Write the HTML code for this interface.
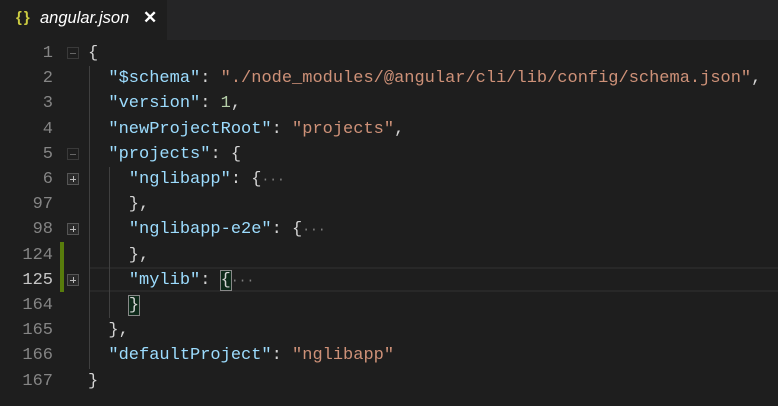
<!DOCTYPE html>
<html><head><meta charset="utf-8"><style>
body{margin:0;width:778px;height:406px;background:#1e1e1e;overflow:hidden;font-family:"Liberation Mono",monospace;}
.tabs{position:absolute;left:0;top:0;width:778px;height:40px;background:#252526;}
.tab{position:absolute;left:0;top:0;width:167px;height:40px;background:#1e1e1e;font-family:"Liberation Sans",sans-serif;}
.tab .ic{position:absolute;left:16px;top:9px;color:#cbcb41;font-size:15px;font-weight:bold;letter-spacing:2px}
.tab .nm{position:absolute;left:40px;top:9px;color:#fff;font-size:16.5px;font-style:italic}
.tab .x{position:absolute;left:143px;top:8px;color:#fff;font-size:17px;font-weight:bold}
.row{position:absolute;left:0;height:25.2px;width:778px;line-height:25.2px;font-size:17px;white-space:pre;color:#d4d4d4;top:1px}
.ln{position:absolute;left:0;width:53px;text-align:right;color:#858585}
.code{position:absolute;left:88px}
.k{color:#9cdcfe}.s{color:#ce9178}.n{color:#b5cea8}.e{color:#808080;font-size:13px}
.fold{position:absolute;left:67px;top:6px;width:12px;height:12px;border:1px solid #555;box-sizing:border-box;background:#2a2a2a}
.fold:before{content:"";position:absolute;left:2px;top:5px;width:6px;height:1px;background:#bbb}
.fold.p:after{content:"";position:absolute;left:5px;top:2px;width:1px;height:6px;background:#bbb}
.fold.m{border-color:#3a3a3a;background:#1e1e1e}.fold.m:before{background:#666}
.guide{position:absolute;width:1px;background:#404040}
.cur{position:absolute;left:89px;width:689px;border-top:2px solid #282828;border-bottom:2px solid #282828;box-sizing:border-box}
.br{outline:1px solid #888;background:#0e2a1a}
</style></head><body>
<div class="tabs"><div class="tab"><span class="ic">{}</span><span class="nm">angular.json</span><span class="x">✕</span></div></div>
<div class="cur" style="top:267px;height:25px"></div>
<div class="guide" style="left:89px;top:66px;height:303px"></div>
<div class="guide" style="left:109px;top:167px;height:151px"></div>
<div style="position:absolute;left:60px;top:242px;width:4px;height:50px;background:#587c0c"></div>
<div class="row" style="top:41px"><span class="ln">1</span><span class="fold m"></span><span class="code">{</span></div>
<div class="row" style="top:66.2px"><span class="ln">2</span><span class="code">  <span class="k">"$schema"</span>: <span class="s">"./node_modules/@angular/cli/lib/config/schema.json"</span>,</span></div>
<div class="row" style="top:91.4px"><span class="ln">3</span><span class="code">  <span class="k">"version"</span>: <span class="n">1</span>,</span></div>
<div class="row" style="top:116.6px"><span class="ln">4</span><span class="code">  <span class="k">"newProjectRoot"</span>: <span class="s">"projects"</span>,</span></div>
<div class="row" style="top:141.8px"><span class="ln">5</span><span class="fold m"></span><span class="code">  <span class="k">"projects"</span>: {</span></div>
<div class="row" style="top:167px"><span class="ln">6</span><span class="fold p"></span><span class="code">    <span class="k">"nglibapp"</span>: {<span class="e">···</span></span></div>
<div class="row" style="top:192.2px"><span class="ln">97</span><span class="code">    },</span></div>
<div class="row" style="top:217.4px"><span class="ln">98</span><span class="fold p"></span><span class="code">    <span class="k">"nglibapp-e2e"</span>: {<span class="e">···</span></span></div>
<div class="row" style="top:242.6px"><span class="ln">124</span><span class="code">    },</span></div>
<div class="row" style="top:267.8px"><span class="ln" style="color:#c6c6c6">125</span><span class="fold p"></span><span class="code">    <span class="k">"mylib"</span>: <span class="br">{</span><span class="e">···</span></span></div>
<div class="row" style="top:293px"><span class="ln">164</span><span class="code">    <span class="br">}</span></span></div>
<div class="row" style="top:318.2px"><span class="ln">165</span><span class="code">  },</span></div>
<div class="row" style="top:343.4px"><span class="ln">166</span><span class="code">  <span class="k">"defaultProject"</span>: <span class="s">"nglibapp"</span></span></div>
<div class="row" style="top:368.6px"><span class="ln">167</span><span class="code">}</span></div>
</body></html>
